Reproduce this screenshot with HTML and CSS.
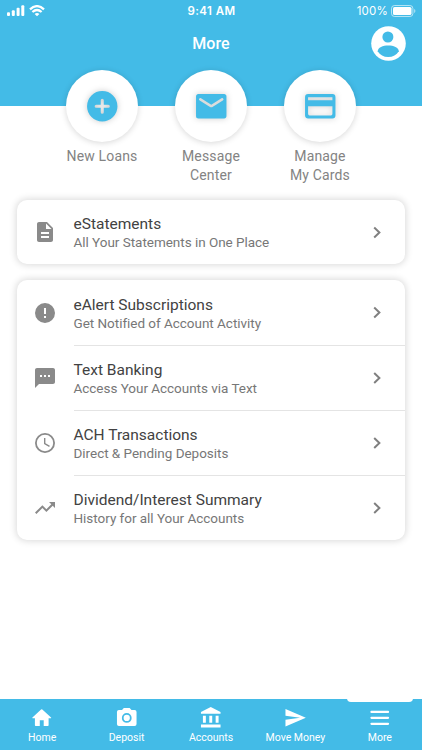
FILE: index.html
```html
<!DOCTYPE html>
<html lang="en">
<head>
    <meta charset="utf-8">
    <meta name="viewport" content="width=device-width, initial-scale=1.0">
    <title>More</title>
    <link rel="stylesheet" href="styles.css">
</head>
<body>
    <header>
        <div class="status">
            <div class="signal">
                <svg width="18" height="12" viewBox="0 0 18 12"><rect x="0" y="7.3" width="3" height="3.7" rx="1"/><rect x="4.8" y="5.2" width="3" height="5.8" rx="1"/><rect x="9.6" y="2.8" width="3" height="8.2" rx="1"/><rect x="14.3" y="0.2" width="3" height="10.8" rx="1"/></svg>
                <svg class="wifi" width="16" height="12" viewBox="0 0 16 12"><path d="M1 4.300Q8-2 15 4.300M3.400 7Q8 3 12.600 7" fill="none" stroke="#fff" stroke-width="2.300"/><path d="M5.600 8.900Q8 7 10.400 8.900L8 11.300z"/></svg>
            </div>
            <div class="time">9:41 AM</div>
            <div class="battery">
                <span>100%</span>
                <svg width="25" height="12" viewBox="0 0 25 12"><rect x=".5" y=".5" width="21.4" height="11" rx="3" fill="none" stroke="#fff" stroke-opacity=".6"/><rect x="2" y="2" width="18.5" height="8" rx="1.6"/><path d="M23.2 4v4q1.2-.7 1.2-2t-1.2-2z" opacity=".6"/></svg>
            </div>
        </div>
        <div class="titlebar">
            <h1>More</h1>
            <svg class="avatar" viewBox="0 0 35 35"><circle cx="17.5" cy="17.5" r="17.3"/><circle cx="16.9" cy="11" r="5.5" class="hole"/><path class="hole" d="M6.7 25.2C6.7 21.4 12 19.4 17.2 19.4S27.8 21.4 27.8 25.2C25.6 29 21.8 31 17.2 31S8.9 29 6.7 25.2z"/></svg>
        </div>
    </header>

    <div class="actions">
        <div class="action">
            <div class="circle"><svg viewBox="0 0 24 24"><path d="M12 2a10 10 0 1 0 0 20 10 10 0 0 0 0-20zm4 11h-3v3a1 1 0 0 1-2 0v-3H8a1 1 0 0 1 0-2h3V8a1 1 0 0 1 2 0v3h3a1 1 0 0 1 0 2z"/></svg></div>
            <p>New Loans</p>
        </div>
        <div class="action">
            <div class="circle"><svg viewBox="0 0 24 24"><path d="M20.5 4h-17C2.600 4 2 4.700 2 5.500v13c0 .9.700 1.500 1.500 1.500h17c.9 0 1.500-.7 1.500-1.500v-13c0-.9-.7-1.500-1.500-1.500zm-.9 4.250-6.540 4.090a2 2 0 0 1-2.120 0L4.400 8.250a.85.85 0 1 1 .9-1.440L12 11l6.700-4.190a.85.85 0 1 1 .9 1.440z"/></svg></div>
            <p>Message<br>Center</p>
        </div>
        <div class="action">
            <div class="circle"><svg viewBox="0 0 24 24"><path d="M20 4H4a2 2 0 0 0-2 2v12c0 1.110.89 2 2 2h16a2 2 0 0 0 2-2V6a2 2 0 0 0-2-2zm-1 14H5a1 1 0 0 1-1-1v-5h16v5a1 1 0 0 1-1 1zm1-10H4V6h16v2z"/></svg></div>
            <p>Manage<br>My Cards</p>
        </div>
    </div>

    <div class="card single">
        <div class="row">
            <svg class="icon" viewBox="0 0 24 24"><path d="M14 2H6c-1.100 0-2 .9-2 2v16c0 1.100.89 2 2 2h12c1.100 0 2-.9 2-2V8l-6-6zm2 16H8v-2h8v2zm0-4H8v-2h8v2zm-3-5V3.500L18.500 9H13z"/></svg>
            <div class="text"><h2>eStatements</h2><p>All Your Statements in One Place</p></div>
            <svg class="arrow" viewBox="0 0 8 12"><path d="M1.200 1L6.400 6l-5.200 5"/></svg>
        </div>
    </div>

    <div class="card">
        <div class="row">
            <svg class="icon" viewBox="0 0 24 24"><path d="M12 2a10 10 0 1 0 0 20 10 10 0 0 0 0-20zm1 15h-2v-2h2v2zm0-4h-2V7h2v6z"/></svg>
            <div class="text"><h2>eAlert Subscriptions</h2><p>Get Notified of Account Activity</p></div>
            <svg class="arrow" viewBox="0 0 8 12"><path d="M1.200 1L6.400 6l-5.200 5"/></svg>
        </div>
        <div class="row">
            <svg class="icon" viewBox="0 0 24 24"><path d="M20 2H4c-1.100 0-2 .9-2 2v18l4-4h14c1.100 0 2-.9 2-2V4c0-1.100-.9-2-2-2zM9 11H7V9h2v2zm4 0h-2V9h2v2zm4 0h-2V9h2v2z"/></svg>
            <div class="text"><h2>Text Banking</h2><p>Access Your Accounts via Text</p></div>
            <svg class="arrow" viewBox="0 0 8 12"><path d="M1.200 1L6.400 6l-5.200 5"/></svg>
        </div>
        <div class="row">
            <svg class="icon" viewBox="0 0 24 24"><g fill="none" stroke="#8a8a8a"><circle cx="12" cy="12" r="9.100" stroke-width="1.800"/><path d="M11.700 7v5.500l4.800 2.900" stroke-width="1.400"/></g></svg>
            <div class="text"><h2>ACH Transactions</h2><p>Direct &amp; Pending Deposits</p></div>
            <svg class="arrow" viewBox="0 0 8 12"><path d="M1.200 1L6.400 6l-5.200 5"/></svg>
        </div>
        <div class="row">
            <svg class="icon" viewBox="0 0 24 24"><path d="M16 6l2.290 2.290-4.880 4.880-4-4L2 16.590 3.410 18l6-6 4 4 6.300-6.290L22 12V6z"/></svg>
            <div class="text"><h2>Dividend/Interest Summary</h2><p>History for all Your Accounts</p></div>
            <svg class="arrow" viewBox="0 0 8 12"><path d="M1.200 1L6.400 6l-5.200 5"/></svg>
        </div>
    </div>

    <nav>
        <a><svg viewBox="0 0 24 24"><path d="M10 20.500v-6h4v6h4.200c.5 0 .8-.3.8-.8V12.500h2.200c.4 0 .6-.5.3-.8L12.600 3.500a1 1 0 0 0-1.300 0L2.500 11.700c-.3.300-.1.800.3.800H5v7.200c0 .5.300.8.800.8z"/></svg>Home</a>
        <a><svg viewBox="0 0 24 24"><path d="M9 2L7.170 4H4a2 2 0 0 0-2 2v12.500a2 2 0 0 0 2 2h16a2 2 0 0 0 2-2V6a2 2 0 0 0-2-2h-3.170L15 2H9zm3 15.200a5 5 0 1 1 0-10 5 5 0 0 1 0 10zm0-1.800a3.200 3.200 0 1 0 0-6.400 3.200 3.200 0 0 0 0 6.400z"/></svg>Deposit</a>
        <a><svg viewBox="0 0 24 24"><path d="M4 10v7h3v-7H4zm6.500 0v7h3v-7h-3zM2 22h20v-3H2v3zm15-12v7h3v-7h-3zM12 1L2 6v2h20V6L12 1z"/></svg>Accounts</a>
        <a><svg viewBox="0 0 24 24"><path d="M1.500 21L22.300 12 1.500 3v7l15 2-15 2z"/></svg>Move Money</a>
        <a class="active"><svg viewBox="0 0 24 24"><path d="M3.500 18.200h17M3.500 12.100h17M3.500 6h17" stroke="#fff" stroke-width="2.200" stroke-linecap="round"/></svg>More</a>
    </nav>
</body>
</html>
```
FILE: styles.css
```css
* {
    box-sizing: border-box;
}
body {
    margin: 0;
    height: 750px;
    display: flex;
    flex-direction: column;
    overflow: hidden;
    background-color: #fff;
    font-family: Roboto, sans-serif;
}
h1, h2, p {
    margin: 0;
    font-weight: 400;
}
svg {
    display: block;
    flex: none;
}
header {
    height: 106px;
    flex: none;
    background-color: #43bbe7;
    color: #fff;
}
header svg {
    fill: #fff;
}
.status {
    display: grid;
    grid-template-columns: 1fr 1fr 1fr;
    align-items: center;
    height: 22px;
    padding: 0 6px 0 7px;
    font-family: Inter, sans-serif;
    font-size: 11.5px;
}
.signal, .battery {
    display: flex;
    align-items: center;
}
.wifi {
    margin-left: 4px;
}
.time {
    text-align: center;
    font-weight: 600;
    letter-spacing: 0.45px;
}
.battery {
    justify-content: flex-end;
    gap: 3px;
    letter-spacing: 0.2px;
}
.titlebar {
    display: grid;
    grid-template-columns: 35px 1fr 35px;
    align-items: center;
    height: 42px;
    padding: 0 16.5px;
}
h1 {
    grid-column: 2;
    text-align: center;
    font-size: 16px;
    font-weight: 500;
    letter-spacing: 0.1px;
}
.avatar {
    width: 35px;
    height: 35px;
}
.avatar .hole {
    fill: #43bbe7;
}
.actions {
    display: flex;
    justify-content: center;
    height: 130px;
    margin-top: -36px;
    flex: none;
}
.action {
    width: 109px;
    text-align: center;
    font-size: 14px;
    line-height: 19px;
    letter-spacing: 0.15px;
    color: #838383;
}
.circle {
    display: flex;
    align-items: center;
    justify-content: center;
    width: 72px;
    height: 72px;
    margin: 0 auto 5px;
    border-radius: 50%;
    background-color: #fff;
    box-shadow: 0 1px 6px rgba(0, 0, 0, 0.16);
}
.circle svg {
    width: 36.5px;
    height: 36.5px;
    fill: #43bbe7;
    filter: drop-shadow(0 0 3px rgba(0, 0, 0, 0.2));
}
.card {
    flex: none;
    margin: 0 17px 16px;
    border-radius: 10px;
    background-color: #fff;
    box-shadow: 0 0 7px 1px rgba(0, 0, 0, 0.15);
}
.row {
    display: flex;
    align-items: center;
    height: 65px;
    padding-left: 16px;
}
.icon {
    width: 24px;
    height: 24px;
    fill: #8a8a8a;
}
.text {
    flex: 1;
    align-self: stretch;
    margin-left: 16.5px;
    padding-top: 15px;
}
.single .row {
    height: 64px;
}
.single .text {
    padding-top: 14px;
}
.row + .row .text, .row + .row .arrow {
    border-top: 1px solid #e4e4e4;
}
.row + .row .text {
    padding-top: 14px;
}
h2 {
    font-size: 15.5px;
    line-height: 20px;
    color: #424242;
}
.text p {
    font-size: 13.5px;
    line-height: 17px;
    letter-spacing: -0.03px;
    color: #777;
}
.arrow {
    width: 32px;
    height: 65px;
    padding-right: 24px;
    fill: none;
    stroke: #808080;
    stroke-width: 2;
}
nav {
    display: flex;
    flex: none;
    height: 51px;
    margin-top: auto;
    background-color: #43bbe7;
}
nav a {
    position: relative;
    flex: 1;
    display: flex;
    flex-direction: column;
    align-items: center;
    padding-top: 7px;
    color: #fff;
    font-size: 10.5px;
    line-height: 15px;
}
nav svg {
    width: 23.5px;
    height: 23.5px;
    fill: #fff;
}
nav .active::before {
    content: "";
    position: absolute;
    top: -1px;
    width: 66px;
    height: 4px;
    border-radius: 0 0 4px 4px;
    background-color: #fff;
}
```
